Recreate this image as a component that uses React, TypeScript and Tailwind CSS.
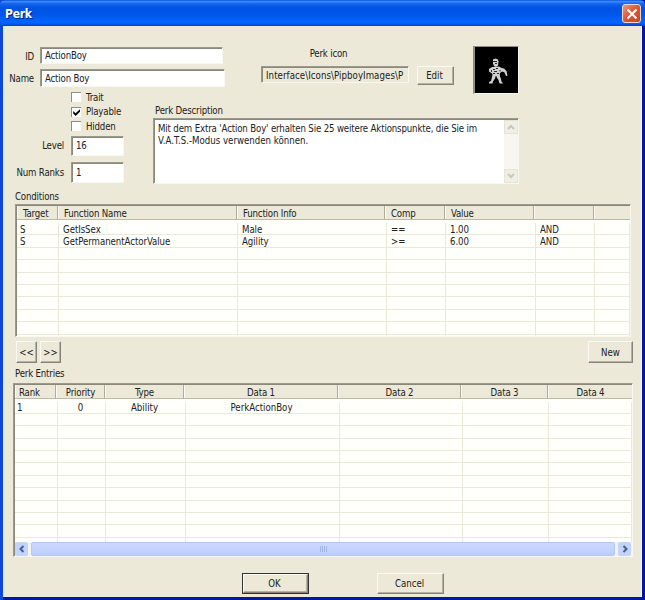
import React from 'react';
import clsx from 'clsx';

const conditionCols = [
  { title: 'Target', width: 'w-[42px]', head: 'w-[41px] pl-[5px]' },
  { title: 'Function Name', width: 'w-[179px]', head: 'w-[179px] pl-[5px]' },
  { title: 'Function Info', width: 'w-[149px]', head: 'w-[148px] pl-[5px]' },
  { title: 'Comp', width: 'w-[59px]', head: 'w-[60px] pl-[5px]' },
  { title: 'Value', width: 'w-[90px]', head: 'w-[89px] pl-[5px]' },
  { title: '', width: 'w-[59px]', head: 'w-[60px]' },
  { title: '', width: 'w-[35px]', head: 'w-[36px]' },
];

const conditions = [
  ['S', 'GetIsSex', 'Male', '==', '1.00', 'AND', ''],
  ['S', 'GetPermanentActorValue', 'Agility', '>=', '6.00', 'AND', ''],
  ...Array.from({ length: 8 }, () => ['', '', '', '', '', '', '']),
];

const entryCols = [
  { title: 'Rank', width: 'w-[43px]', head: 'w-[41px] pl-[3px]' },
  { title: 'Priority', width: 'w-[48px]', head: 'w-[49px] justify-center' },
  { title: 'Type', width: 'w-[80px]', head: 'w-[79px] justify-center' },
  { title: 'Data 1', width: 'w-[154px]', head: 'w-[154px] justify-center' },
  { title: 'Data 2', width: 'w-[123px]', head: 'w-[123px] justify-center' },
  { title: 'Data 3', width: 'w-[86px]', head: 'w-[87px] justify-center' },
  { title: 'Data 4', width: 'w-[83px]', head: 'w-[84px] justify-center' },
];

const entries = [
  ['1', '0', 'Ability', 'PerkActionBoy', '', '', ''],
  ...Array.from({ length: 11 }, () => ['', '', '', '', '', '', '']),
];

const sunken =
  'border border-t-[#9c9a8c] border-l-[#9c9a8c] border-r-[#f8f7f0] border-b-[#f8f7f0] shadow-[inset_1px_1px_#8a887a]';

function Field({ value, className }: { value: string; className?: string }) {
  return (
    <div className={clsx('flex shrink-0 items-center overflow-hidden pl-[4px]', sunken, className)}>
      {value}
    </div>
  );
}

function Button({ label, className }: { label: string; className?: string }) {
  return (
    <button
      className={clsx(
        'flex items-center justify-center border border-t-[#faf9f2] border-l-[#faf9f2] border-r-[#86847a] border-b-[#86847a] bg-[#ece9d8] tracking-[0px] shadow-[inset_-1px_-1px_#b5b2a2]',
        className
      )}
    >
      {label}
    </button>
  );
}

function Check({ label, checked }: { label: string; checked?: boolean }) {
  return (
    <div className="flex h-[14.5px] items-center gap-[5px]">
      <span className="flex size-[10px] items-center justify-center border-t border-l border-[#8f8e80] bg-white">
        {checked && (
          <svg viewBox="0 0 9 9" className="size-[9px]">
            <path d="M1.200 3v2.600L3.600 8l4.400-4.200V1.200l-4.400 4z" fill="#000" />
          </svg>
        )}
      </span>
      <span>{label}</span>
    </div>
  );
}

function Arrow({ d, color }: { d: string; color: string }) {
  return (
    <svg viewBox="0 0 10 10" className="size-[10px]">
      <path d={d} fill="none" stroke={color} strokeWidth="2" />
    </svg>
  );
}

function HeadCells({ cols }: { cols: typeof entryCols }) {
  return (
    <div className="flex h-[14px] shrink-0 border-b border-[#bdb9a6] bg-[#ece9d8]">
      {cols.map((col, i) => (
        <div
          key={i}
          className={clsx(
            'flex shrink-0 items-center border-l border-l-[#faf9f2] pt-[2px]',
            i < cols.length - 1 && 'border-r border-r-[#b0ac9a]',
            col.head
          )}
        >
          {col.title}
        </div>
      ))}
    </div>
  );
}

function PerkFigure() {
  return (
    <svg viewBox="0 0 43 46" className="h-[46px] w-[43px]">
      <g fill="#cfcfcf">
        {/* head and hat */}
        <path d="M18 12.500l2.500-1 2.500 1 .5 2-.5 4-2 1.500-2-1-1-2.500z" />
        {/* torso with hands on hips */}
        <path d="M17 20l7-.5 3.500 2 .5 2.500-3 2-.5 3h-6.500l-1-2.500-3-2 0-2.500z" />
        {/* cape */}
        <path d="M26 21l3 .5 2.500 2.500 1 4.500-1.500.500-1.500-3.500-3-1.500z" />
        {/* legs */}
        <path d="M17.500 28h3.500l-1 3.500-2 3-.500 2h-3.500v-1.500l2-1z" />
        <path d="M21.500 28h3l1.500 4 .5 2.500 1.500 2h-3.500l-1-3.500-2-3z" />
      </g>
      <path
        d="M18 14.500h4M20 16.500h2M16.500 23v2M18 22.500h2M21 21.500h2M19 24.500h3M25 23v1.500M22 26.500h2M18 26.500h2"
        stroke="#2c2c2c"
        strokeWidth="1"
      />
    </svg>
  );
}

export default function App() {
  return (
    <div className="flex h-[600px] w-[645px] flex-col overflow-hidden bg-[linear-gradient(90deg,#0c48e0_0_3px,#0018a0_3px)] font-['DejaVu_Sans_Condensed','DejaVu_Sans',sans-serif] text-[9.6px] leading-[11px] tracking-[-0.18px] whitespace-nowrap text-[#222] [font-stretch:condensed]">
      <header className="flex h-[26px] shrink-0 items-center justify-between rounded-t-[5px] bg-[linear-gradient(#0a50d8_0%,#3c8cff_6%,#1464ee_14%,#0054e3_30%,#0056e8_55%,#0066ff_85%,#005cf0_92%,#003fc0_100%)] pr-[4px] pl-[5px]">
        <h1 className="pt-[3px] text-[12px] font-bold tracking-[-0.25px] text-white [text-shadow:1px_1px_#0a1883]">
          Perk
        </h1>
        <button className="mt-[1px] flex size-[19px] items-center justify-center rounded-[3px] border border-[#f0d8d8] bg-[linear-gradient(135deg,#ec9880,#dd5a38_45%,#c64420)]">
          <svg viewBox="0 0 12 12" className="size-[12px]">
            <path d="M1.500 1.500l9 9M10.500 1.500l-9 9" stroke="#fff" strokeWidth="2" />
          </svg>
        </button>
      </header>

      <main className="mx-[3px] mb-[3px] flex flex-1 flex-col overflow-hidden border-r border-[#fbf5e4] bg-[#ece9d8]">
        <div className="flex h-[164px] shrink-0">
          <div className="flex w-[150px] shrink-0 flex-col pt-[21px]">
            <div className="flex h-[17px] items-center gap-[6px]">
              <span className="w-[31px] shrink-0 pt-[2px] text-right">ID</span>
              <Field value="ActionBoy" className="h-[17px] w-[183px] bg-white" />
            </div>
            <div className="mt-[5px] flex h-[18px] items-center gap-[6px]">
              <span className="flex w-[31px] shrink-0 justify-end">Name</span>
              <Field value="Action Boy" className="h-[18px] w-[185px] bg-white" />
            </div>
            <div className="mt-[3px] ml-[68px]">
              <Check label="Trait" />
              <Check label="Playable" checked />
              <Check label="Hidden" />
            </div>
            <div className="mt-[2px] flex items-center gap-[7px]">
              <span className="w-[61px] shrink-0 text-right">Level</span>
              <Field value="16" className="h-[20px] w-[53px] bg-white" />
            </div>
            <div className="mt-[6px] flex items-center gap-[7px]">
              <span className="w-[61px] shrink-0 text-right">Num Ranks</span>
              <Field value="1" className="h-[21px] w-[53px] bg-white" />
            </div>
          </div>

          <div className="flex w-[366px] shrink-0 flex-col pt-[20px]">
            <div className="flex h-[49px] justify-end">
              <div className="w-[148px]">
                <p className="mt-[2px] text-center">
                  <span className="mr-[13px]">Perk icon</span>
                </p>
                <Field
                  value="Interface\Icons\PipboyImages\P"
                  className="mt-[7px] h-[17px] w-[148px] pt-px tracking-[0.06px]"
                />
              </div>
              <Button label="Edit" className="mt-[20px] ml-[8px] h-[19px] w-[37px] pr-[2px]" />
              <div className="ml-[19px] h-[48px] w-[46px] border-t border-r border-b border-l-2 border-t-[#8f8e80] border-r-[#f8f7f0] border-b-[#f8f7f0] border-l-[#8f8e80] bg-black">
                <PerkFigure />
              </div>
            </div>
            <p className="mt-[10px] ml-[2px]">Perk Description</p>
            <div className={clsx('mt-[2px] flex h-[66px] justify-between bg-white pt-px', sunken)}>
              <p className="pt-[3px] pl-[4px] leading-[11.500px] tracking-[-0.15px]">
                Mit dem Extra 'Action Boy' erhalten Sie 25 weitere Aktionspunkte, die Sie im
                <br />
                <span className="tracking-[0px]">V.A.T.S.-Modus verwenden können.</span>
              </p>
              <div className="flex w-[14px] flex-col justify-between bg-[#f7f6f0]">
                <span className="flex h-[14px] items-center justify-center border border-[#e6e4d8] bg-[#f1efe5]">
                  <Arrow d="M2 7l3-3 3 3" color="#c9c7ba" />
                </span>
                <span className="flex h-[14px] items-center justify-center border border-[#e6e4d8] bg-[#f1efe5]">
                  <Arrow d="M2 3l3 3 3-3" color="#c9c7ba" />
                </span>
              </div>
            </div>
          </div>
        </div>

        <section className="ml-[12px] w-[618px] shrink-0">
          <p className="h-[14px] pt-px">Conditions</p>
          <div className={clsx('h-[133px] w-[616px] overflow-hidden bg-[#fffffc] pt-px pl-px', sunken)}>
            <HeadCells cols={conditionCols} />
            <div className="h-[3px]" />
            {conditions.map((row, i) => (
              <div key={i} className="flex h-[12.4px] border-b border-[#e9e8d9] tracking-[-0.06px]">
                {row.map((cell, j) => (
                  <div
                    key={j}
                    className={clsx(
                      'flex shrink-0 items-center border-r border-[#e9e8d9] pt-px',
                      j === 0 ? 'pl-[3px]' : 'pl-[4px]',
                      conditionCols[j].width
                    )}
                  >
                    {cell}
                  </div>
                ))}
              </div>
            ))}
          </div>
          <div className="mt-[4px] flex gap-[3px]">
            <Button label="<<" className="ml-px h-[22px] w-[21px]" />
            <Button label=">>" className="h-[22px] w-[21px]" />
            <Button label="New" className="ml-auto h-[22px] w-[45px]" />
          </div>
        </section>

        <section className="mt-[5px] ml-[10px] shrink-0">
          <p className="h-[15px] pl-[2px]">Perk Entries</p>
          <div
            className={clsx(
              'flex h-[174px] w-[620px] flex-col overflow-hidden bg-[#fffffc] pt-px pl-px',
              sunken
            )}
          >
            <HeadCells cols={entryCols} />
            <div className="h-[143px] overflow-hidden pt-[2.500px]">
              {entries.map((row, i) => (
                <div key={i} className="flex h-[12.4px] border-b border-[#e9e8d9] tracking-[0px]">
                  {row.map((cell, j) => (
                    <div
                      key={j}
                      className={clsx(
                        'flex shrink-0 items-center border-r border-[#e9e8d9] pt-px',
                        j === 0 ? 'pl-[2px]' : 'justify-center pr-[2px]',
                        entryCols[j].width
                      )}
                    >
                      {cell}
                    </div>
                  ))}
                </div>
              ))}
            </div>
            <div className="flex h-[14px] shrink-0 items-stretch gap-[3px] bg-[#f4f3ee]">
              <span className="flex w-[13px] items-center justify-center rounded-[2px] bg-[#c3d3fb]">
                <Arrow d="M6.500 2l-3 3 3 3" color="#44618f" />
              </span>
              <span className="flex w-[584px] items-center justify-center gap-px rounded-[2px] border border-[#b4c8f6] bg-[linear-gradient(#cbd9ff,#bccffc)]">
                {[0, 1, 2, 3].map((i) => (
                  <i key={i} className="h-[6px] w-px bg-[#9fb6ea]" />
                ))}
              </span>
              <span className="flex w-[13px] items-center justify-center rounded-[2px] bg-[#c3d3fb]">
                <Arrow d="M3.500 2l3 3-3 3" color="#44618f" />
              </span>
            </div>
          </div>
        </section>

        <footer className="mt-[16px] ml-[239px] flex shrink-0 gap-[68px]">
          <div className="border border-[#333]">
            <Button label="OK" className="h-[19px] w-[65px] pr-[2px]" />
          </div>
          <Button label="Cancel" className="h-[21px] w-[67px] pr-[2px]" />
        </footer>
      </main>
    </div>
  );
}
